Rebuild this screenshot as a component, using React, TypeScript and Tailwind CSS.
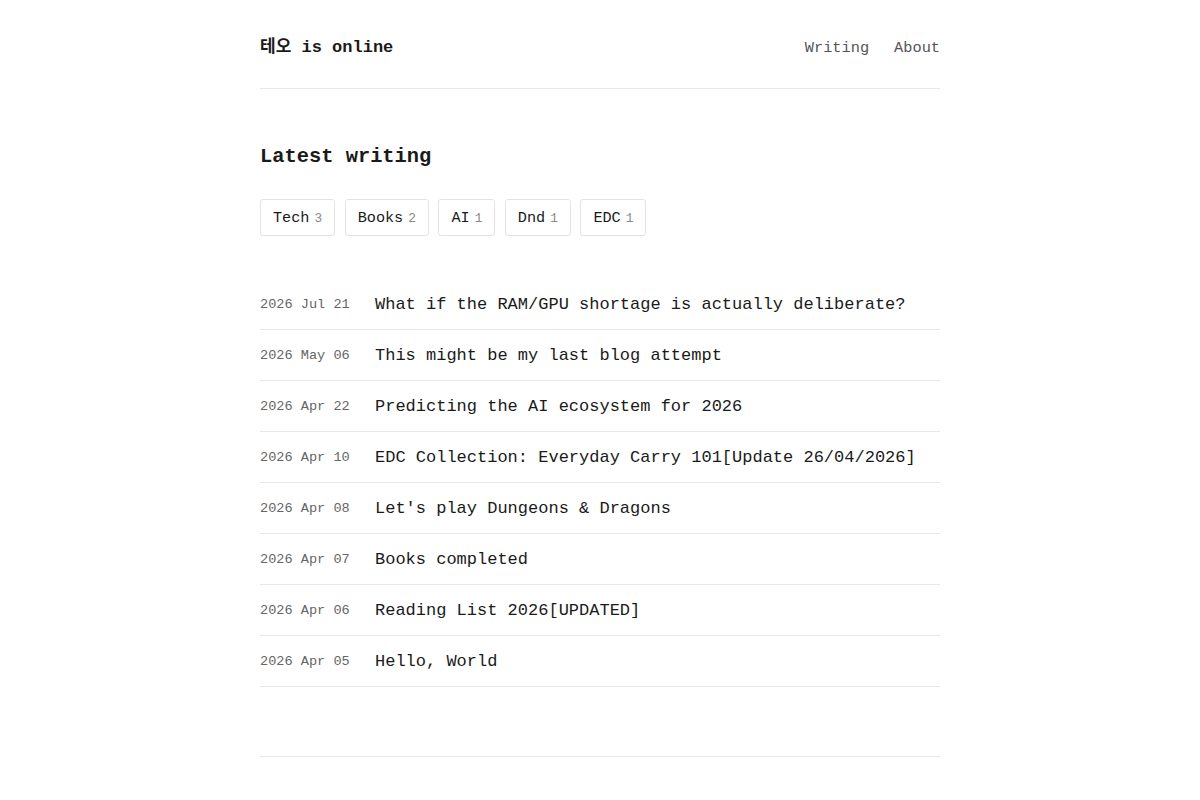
const tags = [
  { name: 'Tech', count: 3 },
  { name: 'Books', count: 2 },
  { name: 'AI', count: 1 },
  { name: 'Dnd', count: 1 },
  { name: 'EDC', count: 1 },
];

const posts = [
  { date: '2026 Jul 21', title: 'What if the RAM/GPU shortage is actually deliberate?' },
  { date: '2026 May 06', title: 'This might be my last blog attempt' },
  { date: '2026 Apr 22', title: 'Predicting the AI ecosystem for 2026' },
  { date: '2026 Apr 10', title: 'EDC Collection: Everyday Carry 101[Update 26/04/2026]' },
  { date: '2026 Apr 08', title: "Let's play Dungeons & Dragons" },
  { date: '2026 Apr 07', title: 'Books completed' },
  { date: '2026 Apr 06', title: 'Reading List 2026[UPDATED]' },
  { date: '2026 Apr 05', title: 'Hello, World' },
];

export default function App() {
  return (
    <div className="min-h-screen bg-white text-[#1a1a1a] font-['Liberation_Mono','Noto_Sans_CJK_KR',monospace]">
      <div className="mx-auto w-[680px]">
        {/* Site header */}
        <header className="flex items-center justify-between pt-[33px] pb-[25px] border-b border-[#e8e8e8]">
          <a className="text-[17px] leading-[30px] font-bold text-[#1a1a1a]">테오 is online</a>
          <nav className="flex items-center gap-[25px] text-[15.3px] text-[#555]">
            <a>Writing</a>
            <a>About</a>
          </nav>
        </header>

        <main className="pt-[54px]">
          <h2 className="text-[20.4px] leading-[28px] font-bold">Latest writing</h2>

          {/* Tag filters */}
          <div className="mt-[28px] flex gap-[9.5px]">
            {tags.map((tag) => (
              <span
                key={tag.name}
                className="flex items-center h-[37px] px-[12px] pt-[2px] border border-[#e3e3e3] rounded-[3px] text-[15.2px] text-[#1a1a1a]"
              >
                {tag.name}
                <span className="ml-[5px] text-[12.8px] text-[#888]">{tag.count}</span>
              </span>
            ))}
          </div>

          {/* Post list */}
          <ul className="mt-[43px]">
            {posts.map((post) => (
              <li key={post.date} className="flex items-center h-[51px] pt-[2px] border-b border-[#e8e8e8]">
                <span className="w-[115px] shrink-0 text-[13.6px] text-[#666]">{post.date}</span>
                <a className="text-[17px] text-[#1a1a1a]">{post.title}</a>
              </li>
            ))}
          </ul>
        </main>

        <footer className="mt-[69px] border-t border-[#e8e8e8] h-[44px]" />
      </div>
    </div>
  );
}
